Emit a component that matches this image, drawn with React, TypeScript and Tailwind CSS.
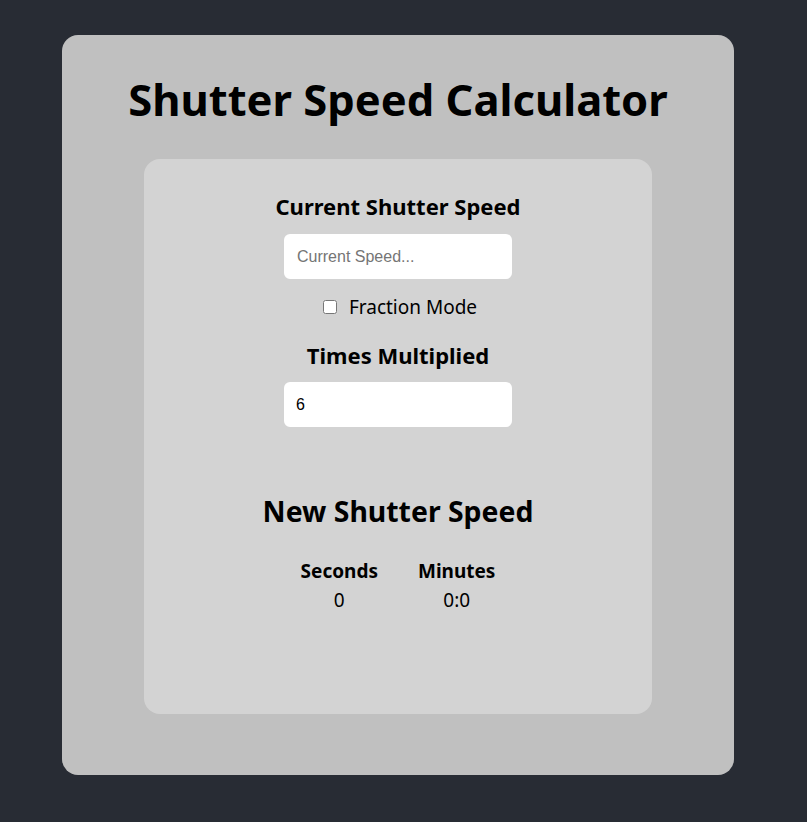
import React from "react";

export default function App() {
  const font = { fontFamily: '"Noto Sans", "Open Sans", sans-serif' };
  return (
    <div className="min-h-[822px] w-full bg-[#282c34] pt-[35px]" style={font}>
      <div className="ml-[62px] flex h-[740px] w-[672px] flex-col items-center rounded-[16px] bg-[#c0c0c0]">
        <h1 className="mt-[20px] mb-[16px] h-[88px] text-[43.5px] font-bold leading-[88px] text-black">
          Shutter Speed Calculator
        </h1>
        <div className="flex h-[555px] w-[508px] flex-col items-center rounded-[16px] bg-[#d3d3d3]">
          <h3 className="mt-[32px] text-[22px] font-bold leading-[30px] text-black">
            Current Shutter Speed
          </h3>
          <input
            className="mt-[13px] h-[45px] w-[228px] rounded-[6px] bg-white px-[13px] text-[16px] text-black outline-none placeholder:text-[#757575]"
            style={{ fontFamily: '"Liberation Sans", Arial, sans-serif' }}
            placeholder="Current Speed..."
          />
          <label className="mt-[16px] ml-[4px] flex items-center text-[19px] leading-[24px] text-black">
            <input type="checkbox" className="mr-[12px] h-[14px] w-[14px]" />
            Fraction Mode
          </label>
          <h3 className="mt-[21px] text-[22px] font-bold leading-[30px] text-black">
            Times Multiplied
          </h3>
          <input
            className="mt-[12px] h-[45px] w-[228px] rounded-[6px] bg-white px-[12px] text-[16px] text-black outline-none"
            style={{ fontFamily: '"Liberation Sans", Arial, sans-serif' }}
            defaultValue="6"
          />
          <h2 className="mt-[64px] text-[28.4px] font-bold leading-[40px] text-black">
            New Shutter Speed
          </h2>
          <div className="mt-[26px] flex gap-[40px] text-black">
            <div className="flex flex-col items-center">
              <span className="text-[19px] font-bold leading-[28px]">Seconds</span>
              <span className="text-[19px] leading-[30px]">0</span>
            </div>
            <div className="flex flex-col items-center">
              <span className="text-[19px] font-bold leading-[28px]">Minutes</span>
              <span className="text-[19px] leading-[30px]">0:0</span>
            </div>
          </div>
        </div>
      </div>
    </div>
  );
}
